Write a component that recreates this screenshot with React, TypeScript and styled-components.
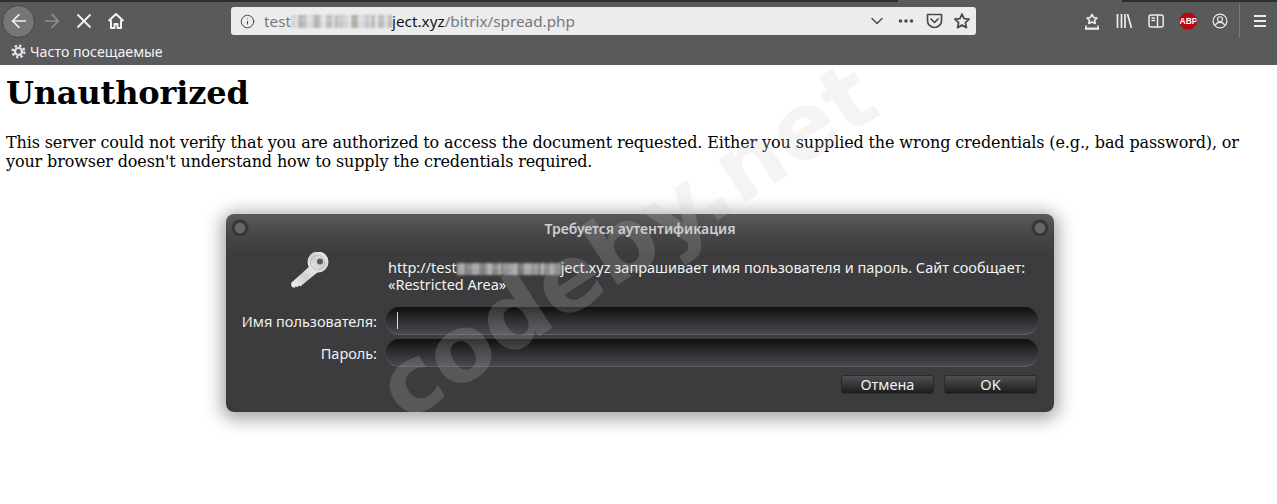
import styled, { createGlobalStyle } from "styled-components";
import { ArrowLeft, ArrowRight, X, ChevronDown, Info } from "lucide-react";

const GlobalStyle = createGlobalStyle`
  html, body {
    margin: 0;
    padding: 0;
    background: #fff;
    overflow: hidden;
  }
`;

const uiFont = `"Noto Sans", "Open Sans", sans-serif`;

const App = () => {
  return (
    <Page>
      <GlobalStyle />
      <Browser>
        <TabEdge>
          <TabEdgeLine $width={898} />
          <TabEdgeLine $width={155} />
        </TabEdge>
        <NavRow>
          <BackButton>
            <ArrowLeft size={22} strokeWidth={1.8} color="#f2f2f2" />
          </BackButton>
          <NavButton>
            <ArrowRight size={22} strokeWidth={1.8} color="#8f8f91" />
          </NavButton>
          <NavButton>
            <X size={24} strokeWidth={1.8} color="#f2f2f2" />
          </NavButton>
          <NavButton>
            <svg width="18" height="18" viewBox="0 0 18 18" fill="none" stroke="#f4f4f4" strokeWidth="2">
              <path d="M1.5 9 9 2l7.5 7" strokeLinejoin="round" />
              <path d="M4 8v8h3.5v-4h3v4H14V8" strokeLinejoin="round" />
            </svg>
          </NavButton>
          <UrlBar>
            <InfoSlot>
              <Info size={15} strokeWidth={1.6} color="#4a4a4c" />
            </InfoSlot>
            <UrlText>
              <UrlMuted>test</UrlMuted>
              <Mosaic $width={101} $height={13} />
              <UrlHost>ject.xyz</UrlHost>
              <UrlMuted>/bitrix/spread.php</UrlMuted>
            </UrlText>
            <UrlActions>
              <ChevronDown size={20} strokeWidth={1.8} color="#4c4c4e" />
              <svg width="18" height="16" viewBox="0 0 18 16" fill="#4c4c4e">
                <circle cx="3.5" cy="8" r="1.8" />
                <circle cx="9" cy="8" r="1.8" />
                <circle cx="14.5" cy="8" r="1.8" />
              </svg>
              <svg width="17" height="16" viewBox="0 0 17 16" fill="none" stroke="#4c4c4e" strokeWidth="1.7">
                <path d="M1.5 1.5h14v6a7 7 0 0 1-14 0z" strokeLinejoin="round" />
                <path d="M5 6l3.5 3.5L12 6" strokeLinecap="round" strokeLinejoin="round" />
              </svg>
              <svg width="18" height="18" viewBox="0 0 18 18" fill="none" stroke="#4c4c4e" strokeWidth="1.8">
                <path d="M9 2l2.1 4.6 5 .6-3.7 3.4 1 5L9 13.1l-4.4 2.5 1-5L1.9 7.2l5-.6z" strokeLinejoin="round" />
              </svg>
            </UrlActions>
          </UrlBar>
          <ToolIcons>
            <ToolSlot>
              <svg width="16" height="17" viewBox="0 0 16 17" fill="none" stroke="#ececec" strokeWidth="1.6">
                <path d="M8 1.5l1.7 3 3.3.5-2.4 2.3.6 3.2L8 9l-3.2 1.5.6-3.2L3 5l3.3-.5z" strokeLinejoin="round" />
                <path d="M2 12.5v3h12v-3" />
                <path d="M1 15.7h14" strokeWidth="2" />
              </svg>
            </ToolSlot>
            <ToolSlot>
              <svg width="16" height="14" viewBox="0 0 16 14" fill="none" stroke="#ececec" strokeWidth="1.7">
                <path d="M1.5 0v14M5.5 0v14M9 0v14M11.5 0l4 14" />
              </svg>
            </ToolSlot>
            <ToolSlot>
              <svg width="16" height="14" viewBox="0 0 16 14" fill="none" stroke="#ececec" strokeWidth="1.5">
                <rect x="1" y="1" width="14.2" height="12" rx="2" />
                <path d="M9.5 1v12M3.5 4H7M3.5 6.5H7" />
              </svg>
            </ToolSlot>
            <ToolSlot>
              <AbpBadge>ABP</AbpBadge>
            </ToolSlot>
            <ToolSlot>
              <svg width="16" height="16" viewBox="0 0 16 16" fill="none" stroke="#ececec" strokeWidth="1.2">
                <circle cx="8" cy="8" r="6.9" />
                <circle cx="8" cy="6.3" r="2.5" strokeWidth="1.1" />
                <path d="M3.5 12.4c.6-2.2 2.4-3 4.5-3s3.9.8 4.5 3" />
              </svg>
            </ToolSlot>
          </ToolIcons>
          <ToolDivider />
          <MenuButton>
            <MenuLine />
            <MenuLine />
            <MenuLine />
          </MenuButton>
        </NavRow>
        <BookmarkRow>
          <svg width="15" height="15" viewBox="0 0 15 15" fill="none" stroke="#e6e6e6">
            <circle cx="7.5" cy="7.5" r="3.5" strokeWidth="2.2" />
            <circle cx="7.5" cy="7.5" r="5.8" strokeWidth="2.4" strokeDasharray="2.3 2.25" />
          </svg>
          <BookmarkLabel>Часто посещаемые</BookmarkLabel>
        </BookmarkRow>
      </Browser>

      <Document>
        <Heading>Unauthorized</Heading>
        <Body>
          This server could not verify that you are authorized to access the document requested. Either you supplied
          the wrong credentials (e.g., bad password), or your browser doesn't understand how to supply the credentials
          required.
        </Body>
      </Document>

      <Dialog>
        <DialogTitle>
          <Rivet />
          <TitleText>Требуется аутентификация</TitleText>
          <Rivet />
        </DialogTitle>
        <DialogGrid>
          <KeySlot>
            <svg width="40" height="38" viewBox="0 0 40 38">
              <defs>
                <linearGradient id="keyMetal" x1="0" y1="1" x2="1" y2="0">
                  <stop offset="0" stopColor="#f4f4f4" />
                  <stop offset="0.5" stopColor="#cfcfcf" />
                  <stop offset="1" stopColor="#f2f2f2" />
                </linearGradient>
              </defs>
              <path d="M21 13 1 31l.5 3.5 3 1.500 1.200-1.800 1.800 1 1.300-1.800 1.700.8L28 20z" fill="url(#keyMetal)" />
              <circle cx="28" cy="10" r="10.5" fill="url(#keyMetal)" />
              <circle cx="27.5" cy="10.5" r="7" fill="none" stroke="#a4a4a4" strokeWidth="1" strokeDasharray="1.5 1" />
              <circle cx="30" cy="9.5" r="3" fill="#5c5c5c" />
            </svg>
          </KeySlot>
          <Message>
            http://test
            <Mosaic $width={104} $height={12} />
            ject.xyz запрашивает имя пользователя и пароль. Сайт сообщает:
            <br />
            «Restricted Area»
          </Message>
          <FieldLabel>Имя пользователя:</FieldLabel>
          <Field>
            <Caret />
          </Field>
          <FieldLabel>Пароль:</FieldLabel>
          <Field />
        </DialogGrid>
        <DialogButtons>
          <DialogButton>Отмена</DialogButton>
          <DialogButton>OK</DialogButton>
        </DialogButtons>
      </Dialog>

      <Watermark>codeby.net</Watermark>
    </Page>
  );
};

const Page = styled.div`
  position: relative;
  width: 1277px;
  height: 504px;
  overflow: hidden;
  background: #fff;
`;

const Browser = styled.header`
  height: 65px;
  background: #595a5c;
  display: flex;
  flex-direction: column;
`;

const TabEdge = styled.div`
  height: 2px;
  display: flex;
  justify-content: space-between;
  flex-shrink: 0;
`;

const TabEdgeLine = styled.div<{ $width: number }>`
  width: ${(p) => p.$width}px;
  background: #2f2f31;
`;

const NavRow = styled.div`
  height: 38px;
  display: flex;
  align-items: center;
  padding-left: 2px;
`;

const BackButton = styled.div`
  width: 31px;
  height: 31px;
  margin-right: 1px;
  border-radius: 50%;
  background: #767678;
  border: 1px solid #454547;
  display: flex;
  align-items: center;
  justify-content: center;
  flex-shrink: 0;
`;

const NavButton = styled.div`
  width: 32px;
  height: 32px;
  display: flex;
  align-items: center;
  justify-content: center;
  flex-shrink: 0;
`;

const UrlBar = styled.div`
  width: 745px;
  height: 28px;
  margin-left: 99px;
  border-radius: 3px;
  background: #ececec;
  display: flex;
  align-items: center;
  flex-shrink: 0;
`;

const InfoSlot = styled.div`
  width: 33px;
  display: flex;
  justify-content: center;
  flex-shrink: 0;
`;

const UrlText = styled.div`
  flex: 1;
  display: flex;
  align-items: center;
  font-family: ${uiFont};
  font-size: 15.3px;
  white-space: nowrap;
`;

const UrlMuted = styled.span`
  color: #77787a;
`;

const UrlHost = styled.span`
  color: #161616;
`;

const Mosaic = styled.span<{ $width: number; $height: number }>`
  display: inline-block;
  width: ${(p) => p.$width}px;
  height: ${(p) => p.$height}px;
  vertical-align: middle;
  opacity: 0.7;
  filter: blur(0.8px);
  background:
    repeating-linear-gradient(90deg, transparent 0 7px, rgba(120, 120, 120, 0.55) 7px 10px, transparent 10px 23px, rgba(150, 135, 120, 0.6) 23px 29px, transparent 29px 37px),
    linear-gradient(transparent 0 3px, rgba(255, 255, 255, 0.25) 3px 6px, transparent 6px),
    repeating-linear-gradient(90deg, #c8c8c8 0 5px, #e2e2e2 5px 9px, #a6a6a6 9px 15px, #d4d4d4 15px 22px, #b4b4b4 22px 26px);
`;

const UrlActions = styled.div`
  display: flex;
  align-items: center;
  gap: 10.5px;
  padding-right: 5px;
`;

const ToolIcons = styled.div`
  display: flex;
  margin-left: 100px;
`;

const ToolSlot = styled.div`
  width: 32px;
  display: flex;
  justify-content: center;
  align-items: center;
`;

const AbpBadge = styled.div`
  width: 17px;
  height: 17px;
  clip-path: polygon(30% 0, 70% 0, 100% 30%, 100% 70%, 70% 100%, 30% 100%, 0 70%, 0 30%);
  background: #b80a0a;
  color: #fff;
  font-family: "Liberation Sans", sans-serif;
  font-size: 8.5px;
  font-weight: 700;
  line-height: 17px;
  text-align: center;
`;

const ToolDivider = styled.div`
  width: 1px;
  height: 34px;
  margin-left: 3px;
  background: #78787a;
`;

const MenuButton = styled.div`
  width: 12px;
  margin-left: 14px;
  display: flex;
  flex-direction: column;
  gap: 3px;
`;

const MenuLine = styled.div`
  height: 2px;
  background: #ececec;
`;

const BookmarkRow = styled.div`
  height: 25px;
  box-sizing: border-box;
  padding: 0 0 2px 11px;
  display: flex;
  align-items: center;
  gap: 4px;
`;

const BookmarkLabel = styled.span`
  font-family: ${uiFont};
  font-size: 14.2px;
  color: #f4f4f4;
`;

const Document = styled.main`
  padding: 0 6px;
  font-family: "DejaVu Serif", serif;
  color: #000;
`;

const Heading = styled.h1`
  margin: 0;
  padding-top: 9px;
  font-size: 32px;
  line-height: 38px;
  letter-spacing: -0.15px;
`;

const Body = styled.p`
  margin: 21px 0 0;
  font-size: 16px;
  line-height: 19px;
  letter-spacing: -0.124px;
`;

const Dialog = styled.section`
  position: absolute;
  left: 226px;
  top: 214px;
  width: 828px;
  height: 198px;
  box-sizing: border-box;
  border-radius: 8px;
  background: linear-gradient(#5a5a5c 0, #474749 20px, #3c3c3e 42px, #3c3c3e 100%);
  box-shadow: 0 3px 18px 4px rgba(0, 0, 0, 0.36);
  font-family: ${uiFont};
  display: flex;
  flex-direction: column;
`;

const DialogTitle = styled.div`
  height: 28px;
  padding: 0 5px;
  display: flex;
  align-items: center;
  justify-content: space-between;
`;

const TitleText = styled.span`
  font-size: 14px;
  font-weight: 600;
  color: #cfcfcf;
`;

const Rivet = styled.span`
  width: 18px;
  height: 18px;
  border-radius: 50%;
  background: radial-gradient(circle, #666668 0 4.5px, #2e2e30 6.5px, #48484a 9px);
`;

const DialogGrid = styled.div`
  margin-top: 17px;
  display: grid;
  grid-template-columns: 151px 652px;
  grid-template-rows: 44px 28px 28px;
  column-gap: 9px;
  row-gap: 4px;
`;

const KeySlot = styled.div`
  padding-left: 64px;
  margin-top: -7px;
`;

const Message = styled.div`
  padding-left: 2px;
  font-size: 14.5px;
  line-height: 17px;
  color: #f2f2f2;
  white-space: nowrap;
`;

const FieldLabel = styled.label`
  font-size: 14.5px;
  line-height: 28px;
  color: #f0f0f0;
  text-align: right;
`;

const Field = styled.div`
  position: relative;
  border-radius: 13px;
  background: linear-gradient(#0f0f10 0, #27272a 35%, #4b4b50 100%);
  box-shadow: inset 0 -1px 0 #5c5c62;
`;

const Caret = styled.span`
  position: absolute;
  left: 11px;
  top: 5px;
  width: 1px;
  height: 17px;
  background: #d8d8d8;
`;

const DialogButtons = styled.div`
  margin-top: 8px;
  padding-right: 17px;
  display: flex;
  justify-content: flex-end;
  gap: 10px;
`;

const DialogButton = styled.button`
  width: 93px;
  height: 19px;
  padding: 0;
  border: 1px solid #2a2a2b;
  border-radius: 3px;
  background: linear-gradient(#505052, #1d1d1e);
  font-family: ${uiFont};
  font-size: 14.5px;
  line-height: 17px;
  color: #f2f2f2;
`;

const Watermark = styled.div`
  position: absolute;
  left: 342px;
  top: 196px;
  transform: rotate(-33deg);
  font-family: "DejaVu Sans", sans-serif;
  font-size: 92px;
  font-weight: 700;
  line-height: 1;
  color: rgba(200, 200, 200, 0.2);
  pointer-events: none;
  white-space: nowrap;
`;

export default App;
